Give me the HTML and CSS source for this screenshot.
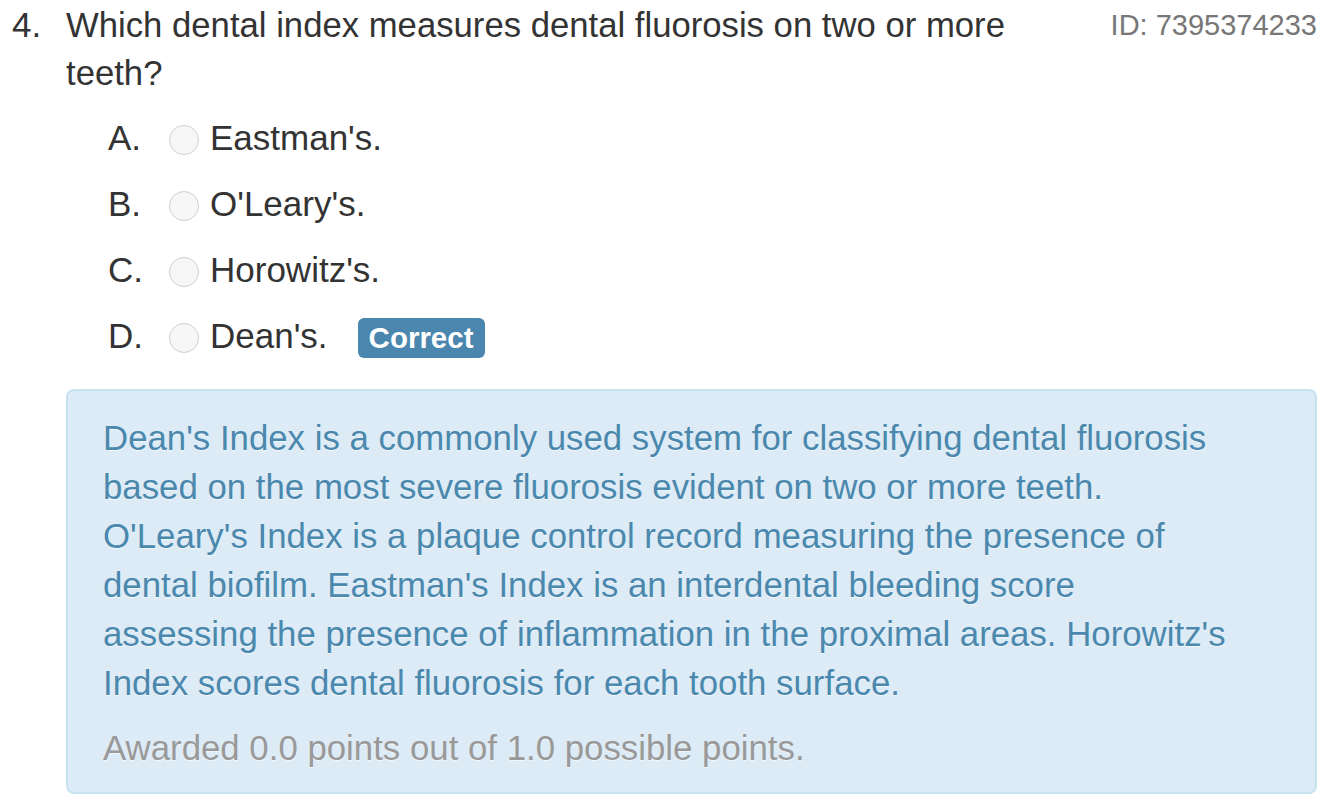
FILE: index.html
```html
<!DOCTYPE html>
<html>
<head>
<meta charset="utf-8">
<link rel="stylesheet" href="styles.css">
</head>
<body>
<div class="question">
  <div class="q-head">
    <div class="q-num">4.</div>
    <div class="q-text">Which dental index measures dental fluorosis on two or more teeth?</div>
    <div class="q-id">ID: 7395374233</div>
  </div>
  <ul class="options">
    <li class="option"><span class="opt-letter">A.</span><span class="radio"></span><span class="opt-text">Eastman's.</span></li>
    <li class="option"><span class="opt-letter">B.</span><span class="radio"></span><span class="opt-text">O'Leary's.</span></li>
    <li class="option"><span class="opt-letter">C.</span><span class="radio"></span><span class="opt-text">Horowitz's.</span></li>
    <li class="option"><span class="opt-letter">D.</span><span class="radio"></span><span class="opt-text">Dean's.</span><span class="badge">Correct</span></li>
  </ul>
  <div class="explanation">
    <p class="exp-text">Dean's Index is a commonly used system for classifying dental fluorosis based on the most severe fluorosis evident on two or more teeth. O'Leary's Index is a plaque control record measuring the presence of dental biofilm. Eastman's Index is an interdental bleeding score assessing the presence of inflammation in the proximal areas. Horowitz's Index scores dental fluorosis for each tooth surface.</p>
    <p class="points">Awarded 0.0 points out of 1.0 possible points.</p>
  </div>
</div>
</body>
</html>
```
FILE: styles.css
```css
html, body {
  margin: 0;
  padding: 0;
  background: #ffffff;
}
body {
  font-family: "Liberation Sans", Arial, Helvetica, sans-serif;
  color: #333333;
  font-size: 35px;
  line-height: 48px;
}
.question {
  padding: 1px 17px 0 12px;
}
.q-head {
  display: flex;
  align-items: flex-start;
}
.q-num {
  width: 54px;
  flex: none;
}
.q-text {
  flex: 1;
  font-size: 34.7px;
  padding-right: 40px;
}
.q-id {
  flex: none;
  color: #777777;
  font-size: 29px;
  line-height: 48px;
}
.options {
  list-style: none;
  margin: 8px 0 0 0;
  padding: 0 0 0 96px;
}
.option {
  display: flex;
  align-items: center;
  height: 66px;
}
.opt-letter {
  width: 61px;
  flex: none;
}
.radio {
  width: 28px;
  height: 28px;
  border: 1px solid #cfcfcf;
  border-radius: 50%;
  background: #f7f7f7;
  margin-right: 11px;
  flex: none;
  position: relative;
  top: 2px;
}
.badge {
  margin-left: 30px;
  background: #4a86ad;
  color: #ffffff;
  font-weight: bold;
  font-size: 29.5px;
  line-height: 40px;
  height: 40px;
  padding: 0 11px;
  border-radius: 6px;
  position: relative;
  top: 2px;
}
.explanation {
  margin: 20px 0 0 54px;
  background: #ddebf6;
  border: 2px solid #c6e4ef;
  border-radius: 8px;
  padding: 22px 77px 20px 35px;
  color: #4a88ae;
  font-size: 34.8px;
  text-shadow: 0 1px 0 rgba(255,255,255,0.6);
}
.exp-text {
  margin: 0;
  line-height: 49px;
}
.points {
  margin: 16px 0 0 0;
  color: #999999;
  line-height: 49px;
}
```
